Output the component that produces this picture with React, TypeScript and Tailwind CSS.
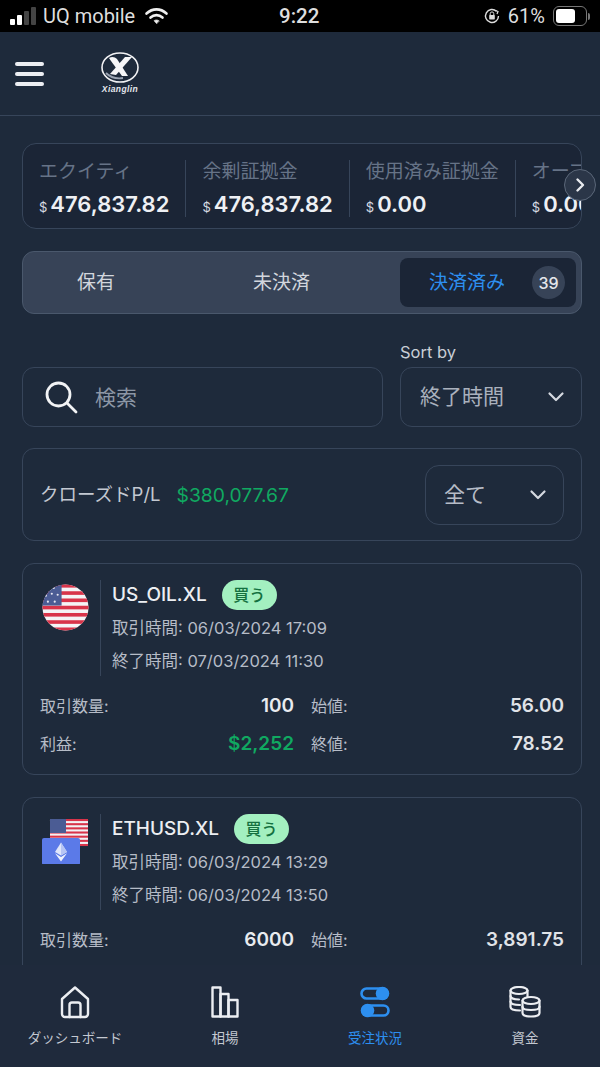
import React from "react";

function UsFlagCircle() {
  const stripes = Array.from({ length: 13 }, (_, i) => i);
  return (
    <svg width="47" height="47" viewBox="0 0 48 48">
      <defs>
        <clipPath id="flagc"><circle cx="24" cy="24" r="23.5" /></clipPath>
      </defs>
      <g clipPath="url(#flagc)">
        <rect width="48" height="48" fill="#f4f4f6" />
        {stripes.filter((i) => i % 2 === 0).map((i) => (
          <rect key={i} x="0" y={i * 3.7} width="48" height="3.7" fill="#d8344a" />
        ))}
        <rect width="20" height="22" fill="#4b5c94" />
        {[[5, 5], [12, 4], [4, 12], [10, 10], [16, 11], [6, 18], [13, 18]].map(([x, y]) => (
          <circle key={x * 100 + y} cx={x} cy={y} r="1.1" fill="#e8e8f2" />
        ))}
      </g>
    </svg>
  );
}

function EthFlag() {
  return (
    <svg width="48" height="48" viewBox="0 0 48 48" className="-mt-[2px] -ml-[1px]">
      <rect x="9" y="3" width="38" height="27" rx="1.5" fill="#f2f2f5" />
      {[0, 2, 4, 6, 8, 10, 12].map((i) => (
        <rect key={i} x="9" y={3 + i * 2.08} width="38" height="2.08" fill="#d8344a" />
      ))}
      <rect x="9" y="3" width="16" height="14" fill="#4b5c94" />
      <rect x="1" y="22" width="38" height="27" rx="2" fill="#5b7ae8" />
      <path d="M20 26.5 L26 36 L20 39.5 L14 36 Z" fill="#dfe6fb" />
      <path d="M20 26.5 L26 36 L20 39.5 Z" fill="#b6c5f5" />
      <path d="M14 37.3 L20 41 L26 37.3 L20 45.5 Z" fill="#eef2fd" />
    </svg>
  );
}

function Chevron() {
  return (
    <svg width="18" height="12" viewBox="0 0 18 12" fill="none" stroke="#d5d9e0" strokeWidth="2.2" strokeLinecap="round" strokeLinejoin="round">
      <path d="M2.5 2.5 L9 9 L15.5 2.5" />
    </svg>
  );
}

function StatusBar() {
  return (
    <div className="h-8 shrink-0 bg-black flex items-center justify-between pl-[10px] pr-[10px] text-[#dedede] relative font-['Roboto',sans-serif]">
      <div className="flex items-center">
        <div className="flex items-end gap-[2px] h-[18px]">
          <div className="w-[5px] h-[6px] rounded-[1px] bg-white" />
          <div className="w-[5px] h-[10px] rounded-[1px] bg-white" />
          <div className="w-[5px] h-[14px] rounded-[1px] bg-[#444]" />
          <div className="w-[5px] h-[18px] rounded-[1px] bg-[#444]" />
        </div>
        <span className="ml-[7px] text-[20px] leading-none">UQ mobile</span>
        <svg className="ml-[9px]" width="25" height="18" viewBox="0 0 24 18" fill="none" stroke="#eee" strokeLinecap="round">
          <path d="M2 6.5 C8 1 16 1 22 6.5" strokeWidth="2.6" />
          <path d="M6 10.5 C9.5 7.3 14.5 7.3 18 10.5" strokeWidth="2.6" />
          <path d="M12 16.5 L9.5 13.7 C11 12.6 13 12.6 14.5 13.7 Z" fill="#eee" strokeWidth="0.6" />
        </svg>
      </div>
      <span className="absolute left-[279px] top-[6px] text-[20.5px] leading-[20px] font-medium">9:22</span>
      <div className="flex items-center">
        <svg width="18" height="18" viewBox="0 0 18 18" fill="none" stroke="#ddd" strokeWidth="1.4">
          <path d="M15.5 9 A6.5 6.5 0 1 1 13.5 4.3" />
          <path d="M12.5 3.5 L15 4.5 L14 7" strokeWidth="1.2" />
          <rect x="6.2" y="8" width="5.6" height="4.4" rx="0.6" fill="#ddd" stroke="none" />
          <path d="M7.2 8 V6.7 A1.8 1.8 0 0 1 10.8 6.7 V8" strokeWidth="1" />
        </svg>
        <span className="ml-[7px] text-[20px] leading-none">61%</span>
        <div className="ml-[8px] w-[34px] h-[20px] rounded-[6px] border border-[#777] p-[2px]">
          <div className="w-[19px] h-full rounded-[3px] bg-white" />
        </div>
        <div className="ml-[1px] w-[2px] h-[7px] rounded-r bg-[#777]" />
      </div>
    </div>
  );
}

function Header() {
  return (
    <div className="h-[84px] shrink-0 border-b border-[#37455a] flex items-center pl-[15px]">
      <div className="flex flex-col gap-[6px] w-[29px]">
        <div className="h-[4px] rounded-full bg-[#eceef2]" />
        <div className="h-[4px] rounded-full bg-[#eceef2]" />
        <div className="h-[4px] rounded-full bg-[#eceef2]" />
      </div>
      <div className="ml-[56px] flex flex-col items-center w-[40px] -mt-[1px]">
        <svg width="38" height="31" viewBox="0 0 38 31" fill="none">
          <ellipse cx="19" cy="15.5" rx="18" ry="14.5" stroke="#f2f2f4" strokeWidth="1.6" />
          <path d="M8 6 C11 4 14 5 16 7 L27 24 L21 24 L10 9 Z" fill="#f6f6f8" />
          <path d="M31 5 L24 5 L9 22 L15 23 Z" fill="#f6f6f8" />
          <path d="M5 21 C9 25 15 27 22 26" stroke="#9aa3b2" strokeWidth="1.8" />
        </svg>
        <span className="mt-[1px] text-[8.5px] leading-[10px] font-bold italic tracking-[0.4px] text-[#e5e7ec] font-['Liberation_Sans',sans-serif]">Xianglin</span>
      </div>
    </div>
  );
}

function Stat({ label, value, last }: { label: string; value: string; last?: boolean }) {
  return (
    <div className={`shrink-0 flex flex-col justify-between h-[57px] mt-[5px] pl-[16px] pr-[16px] ${last ? "" : "border-r border-[#37455a]"}`}>
      <span className="text-[19px] leading-[24px] text-[#667387]">{label}</span>
      <div className="flex items-baseline whitespace-nowrap">
        <span className="text-[13px] leading-[20px] text-[#d8dce3] mr-[3px]">$</span>
        <span className="text-[22px] leading-[26px] font-semibold text-[#eef0f4]">{value}</span>
      </div>
    </div>
  );
}

function Stats() {
  return (
    <div className="relative">
      <div className="h-[86px] rounded-[14px] border border-[#37455a] bg-[#1b2536] flex items-center overflow-hidden">
        <Stat label="エクイティ" value="476,837.82" />
        <Stat label="余剰証拠金" value="476,837.82" />
        <Stat label="使用済み証拠金" value="0.00" />
        <Stat label="オープン損益" value="0.00" last />
      </div>
      <div className="absolute right-[-14px] top-[26px] w-[32px] h-[32px] rounded-full border border-[#5b6779] bg-[#2b3648] flex items-center justify-center">
        <svg width="12" height="16" viewBox="0 0 12 16" fill="none" stroke="#e8eaee" strokeWidth="2.4" strokeLinecap="round" strokeLinejoin="round">
          <path d="M3.5 2.5 L9 8 L3.5 13.5" />
        </svg>
      </div>
    </div>
  );
}

function Tabs() {
  return (
    <div className="mt-[22px] h-[63px] rounded-[12px] border border-[#4a586c] bg-[#374357] flex items-center pl-[6px] pr-[5px] text-[19px]">
      <div className="w-[134px] pt-[2px] text-center text-[#d2d6dd]">保有</div>
      <div className="flex-1 pt-[2px] text-center text-[#d2d6dd]">未決済</div>
      <div className="w-[176px] h-[49px] rounded-[8px] bg-[#1b2536] flex items-center pl-[29px] pr-[11px] justify-between">
        <span className="pt-[2px] text-[#2d8ff0]">決済済み</span>
        <span className="w-[33px] h-[33px] rounded-full bg-[#374357] flex items-center justify-center text-[16px] font-medium text-[#e5e7eb]">39</span>
      </div>
    </div>
  );
}

function SearchRow() {
  return (
    <div className="mt-[28px] flex gap-[17px] items-end">
      <div className="flex-1 h-[60px] rounded-[12px] border border-[#37455a] flex items-center pl-[21px]">
        <svg width="34" height="34" viewBox="0 0 34 34" fill="none" stroke="#f2f3f5" strokeWidth="2.8" strokeLinecap="round">
          <circle cx="14.5" cy="14.5" r="11.5" />
          <path d="M23 23 L32 32" />
        </svg>
        <span className="ml-[17px] pt-[1px] text-[21px] text-[#8c96a5]">検索</span>
      </div>
      <div className="w-[182px]">
        <div className="text-[16.5px] leading-[20px] text-[#c9ced6] mb-[5px]">Sort by</div>
        <div className="h-[60px] rounded-[12px] border border-[#37455a] flex items-center justify-between pl-[19px] pr-[16px]">
          <span className="text-[21px] text-[#aab1bd]">終了時間</span>
          <Chevron />
        </div>
      </div>
    </div>
  );
}

function PL() {
  return (
    <div className="mt-[21px] h-[93px] rounded-[12px] border border-[#37455a] flex items-center pl-[17px] pr-[17px]">
      <span className="pt-[1px] text-[18.5px] text-[#c3c8d1]">クローズドP/L</span>
      <span className="ml-[16px] pt-[1px] text-[19.3px] text-[#10a961]">$380,077.67</span>
      <div className="ml-auto w-[139px] h-[60px] rounded-[14px] border border-[#37455a] flex items-center justify-between pl-[18px] pr-[16px]">
        <span className="text-[21px] text-[#b6bcc7]">全て</span>
        <Chevron />
      </div>
    </div>
  );
}

function Row({ a, b, c, d, green }: { a: string; b: string; c: string; d: string; green?: boolean }) {
  return (
    <div className="flex h-[38px] items-center">
      <div className="w-[254px] flex items-center justify-between">
        <span className="text-[16px] text-[#b6bcc7]">{a}</span>
        <span className={`text-[19px] font-semibold ${green ? "text-[#10a961]" : "text-[#e9ebef]"}`}>{b}</span>
      </div>
      <div className="flex-1 pl-[17px] flex items-center justify-between">
        <span className="text-[16px] text-[#b6bcc7]">{c}</span>
        <span className="text-[19px] font-semibold text-[#e0e3e8]">{d}</span>
      </div>
    </div>
  );
}

function Trade({ icon, name, open, close, qty, openP, profit, closeP }: {
  icon: React.ReactNode; name: string; open: string; close: string; qty: string; openP: string; profit: string; closeP: string;
}) {
  return (
    <div className="mt-[22px] rounded-[12px] border border-[#37455a] pl-[17px] pr-[17px] pt-[16px] pb-[11px] shrink-0">
      <div className="flex">
        <div className="w-[61px] shrink-0 border-r border-[#37455a] h-[96px] pl-[2px] pt-[4px]">{icon}</div>
        <div className="pl-[11px]">
          <div className="flex items-center h-[30px]">
            <span className="pt-[1px] text-[19px] font-medium text-[#eceef2]">{name}</span>
            <span className="ml-[15px] w-[55px] h-[30px] rounded-full bg-[#a3f0c0] flex items-center justify-center text-[16px] font-medium text-[#14703f]">買う</span>
          </div>
          <div className="mt-[2px] text-[16.5px] leading-[33px] text-[#b6bcc7]">取引時間: {open}</div>
          <div className="text-[16.5px] leading-[33px] text-[#b6bcc7]">終了時間: {close}</div>
        </div>
      </div>
      <div className="mt-[9px]">
        <Row a="取引数量:" b={qty} c="始値:" d={openP} />
        <Row a="利益:" b={profit} c="終値:" d={closeP} green />
      </div>
    </div>
  );
}

function NavItem({ icon, label, active }: { icon: React.ReactNode; label: string; active?: boolean }) {
  return (
    <div className="flex-1 flex flex-col items-center">
      <div className="h-[34px] flex items-center justify-center">{icon}</div>
      <span className={`mt-[9px] text-[13.5px] leading-[20px] ${active ? "text-[#2d8ff0]" : "text-[#c3c8d1]"}`}>{label}</span>
    </div>
  );
}

function BottomNav() {
  const s = { fill: "none", stroke: "#eceef2", strokeWidth: 2.4, strokeLinejoin: "round" as const, strokeLinecap: "round" as const };
  return (
    <div className="h-[102px] shrink-0 bg-[#1f2a3c] flex pt-[20px]">
      <NavItem label="ダッシュボード" icon={
        <svg width="30" height="34" viewBox="0 0 30 34" {...s}>
          <path d="M2 14 L15 2.5 L28 14 V29 A3 3 0 0 1 25 32 H5 A3 3 0 0 1 2 29 Z" />
          <path d="M9.5 32 V20 A2.5 2.5 0 0 1 12 17.5 H18 A2.5 2.5 0 0 1 20.5 20 V32" />
        </svg>} />
      <NavItem label="相場" icon={
        <svg width="28" height="32" viewBox="0 0 28 32" {...s}>
          <path d="M1.5 1.5 H9.5 V30.5 H1.5 Z" />
          <path d="M9.5 8 H17.5 V30.5 H9.5 Z" />
          <path d="M17.5 14 H26.5 V30.5 H17.5 Z" />
        </svg>} />
      <NavItem active label="受注状況" icon={
        <svg width="30" height="32" viewBox="0 0 30 32" fill="none">
          <rect x="1.5" y="2.5" width="26" height="10" rx="5" stroke="#2d8ff0" strokeWidth="2.6" />
          <circle cx="22.5" cy="7.5" r="6.8" fill="#2d8ff0" />
          <rect x="2.5" y="19.5" width="26" height="10" rx="5" stroke="#2d8ff0" strokeWidth="2.6" />
          <circle cx="7.5" cy="24.5" r="6.8" fill="#2d8ff0" />
        </svg>} />
      <NavItem label="資金" icon={
        <svg width="32" height="32" viewBox="0 0 32 32" {...s} strokeWidth={2.2}>
          <ellipse cx="10" cy="4.5" rx="8.5" ry="3.5" />
          <path d="M1.5 4.5 V21 C1.5 23 5 24.5 11 24.5" />
          <path d="M18.5 4.5 V11" />
          <path d="M1.5 10 C1.5 12 5 13.5 10 13.5 M1.5 15.5 C1.5 17.5 5 19 11 19" />
          <ellipse cx="22" cy="14.5" rx="8.5" ry="3.5" />
          <path d="M13.5 14.5 V27 C13.5 29.2 17 30.5 22 30.5 C27 30.5 30.5 29.2 30.5 27 V14.5" />
          <path d="M13.5 20.7 C13.5 22.8 17 24 22 24 C27 24 30.5 22.8 30.5 20.7" />
        </svg>} />
    </div>
  );
}

export default function App() {
  return (
    <div className="w-[600px] h-[1067px] overflow-hidden flex flex-col bg-[#1e2a3b] font-['Inter','Noto_Sans_CJK_JP',sans-serif]">
      <StatusBar />
      <Header />
      <div className="flex-1 min-h-0 overflow-hidden pl-[22px] pr-[18px] pt-[27px]">
        <Stats />
        <Tabs />
        <SearchRow />
        <PL />
        <Trade icon={<UsFlagCircle />} name="US_OIL.XL" open="06/03/2024 17:09" close="07/03/2024 11:30" qty="100" openP="56.00" profit="$2,252" closeP="78.52" />
        <Trade icon={<EthFlag />} name="ETHUSD.XL" open="06/03/2024 13:29" close="06/03/2024 13:50" qty="6000" openP="3,891.75" profit="$1,000" closeP="3,900.00" />
      </div>
      <BottomNav />
    </div>
  );
}
